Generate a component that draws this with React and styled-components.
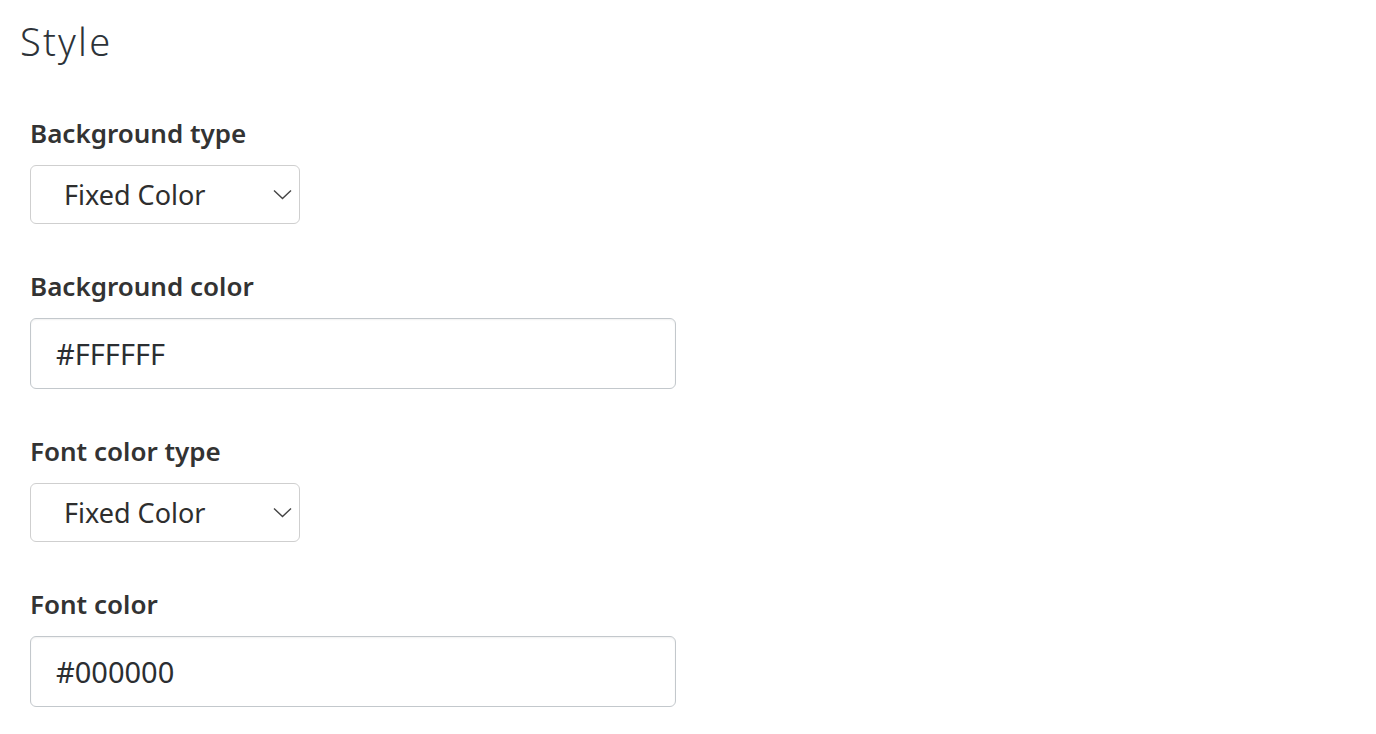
import React from 'react';
import styled, { createGlobalStyle } from 'styled-components';

const GlobalStyle = createGlobalStyle`
  body {
    margin: 0;
    background: #ffffff;
    font-family: "Noto Sans", "Open Sans", sans-serif;
    color: #2e3236;
  }
`;

const Page = styled.div`
  padding: 15px 20px 0 20px;
`;

const Heading = styled.h2`
  margin: 0 0 50px 0;
  font-size: 38px;
  font-weight: 300;
  letter-spacing: 2.2px;
  line-height: 52px;
  color: #2d3339;
`;

const Form = styled.div`
  display: flex;
  flex-direction: column;
  gap: 46.5px;
  padding-left: 10px;
`;

const Field = styled.div`
  display: flex;
  flex-direction: column;
  align-items: flex-start;
`;

const Label = styled.label`
  font-size: 26px;
  font-weight: 600;
  line-height: 32px;
  color: #333333;
  margin-bottom: 15.5px;
`;

const SelectBox = styled.div`
  box-sizing: border-box;
  width: 270px;
  height: 59px;
  border: 1px solid #cfcfcf;
  border-radius: 6px;
  background: #ffffff;
  display: flex;
  align-items: center;
  justify-content: space-between;
  padding: 0 7px 0 33px;
  font-size: 27px;
  color: #2e2e2e;
`;

const TextInput = styled.div`
  box-sizing: border-box;
  width: 646px;
  height: 71px;
  border: 1px solid #c3c8cc;
  border-radius: 6px;
  box-shadow: inset 0 1px 2px rgba(0, 0, 0, 0.06);
  display: flex;
  align-items: center;
  padding: 0 25px;
  font-size: 29px;
  color: #2b2e31;
`;

const Chevron = () => (
  <svg width="19" height="11" viewBox="0 0 19 11" fill="none">
    <path d="M1 1.5 L9.5 9.5 L18 1.5" stroke="#444" strokeWidth="1.4" />
  </svg>
);

const fields = [
  { label: 'Background type', kind: 'select', value: 'Fixed Color' },
  { label: 'Background color', kind: 'input', value: '#FFFFFF' },
  { label: 'Font color type', kind: 'select', value: 'Fixed Color' },
  { label: 'Font color', kind: 'input', value: '#000000' },
];

function App() {
  return (
    <Page>
      <GlobalStyle />
      <Heading>Style</Heading>
      <Form>
        {fields.map((f) => (
          <Field key={f.label}>
            <Label>{f.label}</Label>
            {f.kind === 'select' ? (
              <SelectBox>
                <span>{f.value}</span>
                <Chevron />
              </SelectBox>
            ) : (
              <TextInput>{f.value}</TextInput>
            )}
          </Field>
        ))}
      </Form>
    </Page>
  );
}

export default App;
